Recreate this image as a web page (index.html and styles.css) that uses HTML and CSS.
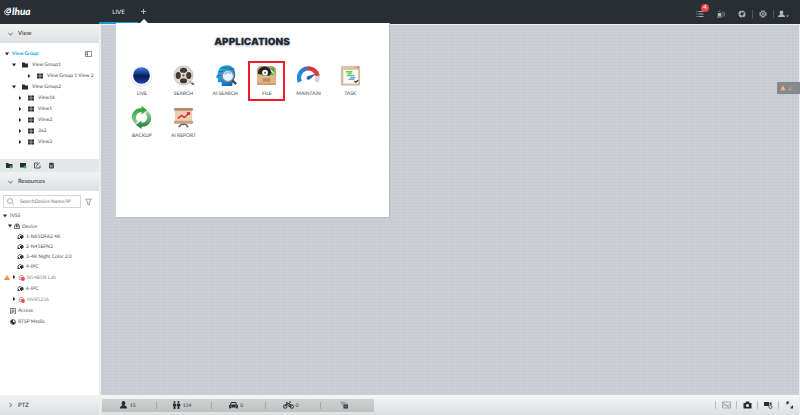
FILE: index.html
```html
<!DOCTYPE html>
<html lang="en">
<head>
<meta charset="utf-8">
<title>Applications</title>
<link rel="stylesheet" href="styles.css">
</head>
<body>
<svg class="defs" aria-hidden="true">
  <symbol id="down" viewBox="0 0 4 4"><path d="M0 .5h4L2 3.5z"/></symbol>
  <symbol id="right" viewBox="0 0 4 4"><path d="M1 0v4l2.400-2z"/></symbol>
  <symbol id="folder" viewBox="0 0 12 12"><path d="M0 1h5l1.500 2H12v8H0z"/></symbol>
  <symbol id="tiles" viewBox="0 0 12 12"><path d="M0 1h5.500v4.500H0zM6.500 1H12v4.500H6.500zM0 6.500h5.500V11H0zM6.500 6.500H12V11H6.500z"/></symbol>
  <symbol id="camera" viewBox="0 0 14 14"><path d="M3 10a4.200 4.200 0 1 1 7-5" fill="none" stroke="currentColor" stroke-width="1.500"/><path d="M1 12h5v-1.500H4L2.500 9H1zM6 6l6-2 1.500 5-3 1v2H8V10H6z"/></symbol>
  <symbol id="offline" viewBox="0 0 14 14"><path d="M2 11V8l2-5h6l2 5" fill="none" stroke="#c98d8d" stroke-width="1.500"/><path d="M3 7h6M2 11h5" stroke="#b98080" stroke-width="1.500"/><circle cx="10" cy="10" r="3.800" fill="#ec4a50"/></symbol>
  <symbol id="warn" viewBox="0 0 14 14"><path d="M7 1l6.500 12H.5z"/><path d="M7 5v4M7 10.300v1.500" stroke="#fff" stroke-width="1.400"/></symbol>
  <symbol id="chevron" viewBox="0 0 6 6"><path d="M.5 1.500L3 4.500l2.500-3" fill="none" stroke="currentColor" stroke-width=".8"/></symbol>
</svg>

<header class="topbar">
  <a class="brand" href="#" aria-label="alhua">
    <svg viewBox="0 0 9 9"><path d="M8 .9C4 .1.900 2.600.7 5.200.6 8.200 4 8.900 6.500 7.600" fill="none" stroke="currentColor"/><path d="M7.800 2.500C5 2 3.200 3.300 3 4.800c-.1 1.700 2.600 1.600 3.900-.3L7.600 2.600 6.800 6.400" fill="none" stroke="currentColor" stroke-width="1.300"/></svg><span>lhua</span>
  </a>
  <nav class="tabs">
    <button class="tab active">LIVE</button>
    <button class="tab add" aria-label="Add tab"><svg viewBox="0 0 5 5"><path d="M2.500 0v5M0 2.500h5" stroke="currentColor"/></svg></button>
  </nav>
  <div class="tools">
    <button aria-label="Events"><svg viewBox="0 0 16 16"><path d="M1 3h2M1 8h2M1 13h2M5 3h10M5 8h10M5 13h10" stroke="currentColor" stroke-width="1.800"/></svg><span class="badge">4</span></button>
    <button aria-label="Alarm"><svg viewBox="0 0 16 16"><path d="M0 13h10v2H0zM1.500 12V6h7v6z"/><path d="M1 2l1.500 2M5 1v3M9 2L7.500 4" stroke="currentColor"/><path d="M11 4q3 4 0 9M13.500 3q3.500 5 0 11" fill="none" stroke="currentColor"/></svg></button>
    <button aria-label="System status"><svg viewBox="0 0 16 16"><circle cx="8" cy="8" r="5.200" fill="none" stroke="currentColor" stroke-width="4" stroke-dasharray="7 1"/><path d="M8 8l6-6" stroke="#272e34" stroke-width="1.500"/></svg></button>
    <button class="ruled" aria-label="Settings"><svg viewBox="0 0 16 16"><circle cx="8" cy="8" r="6.500" fill="none" stroke="currentColor" stroke-width="2" stroke-dasharray="3.400 1.700"/><circle cx="8" cy="8" r="4.800" fill="none" stroke="currentColor" stroke-width="2"/><circle cx="8" cy="8" r="1.800" fill="currentColor"/></svg></button>
    <button class="ruled" aria-label="User"><svg class="wide" viewBox="0 0 22 16"><path d="M7 1c5 0 4 6 2 8 2 1 5 1 5 5H0c0-4 3-4 5-5-2-2-3-8 2-8zM16 11h6l-3 3z" fill="currentColor"/></svg></button>
  </div>
</header>

<div class="workspace">
  <aside class="sidebar">
    <button class="section"><svg><use href="#chevron"/></svg>View</button>
    <div class="views">
      <ul class="tree">
        <li class="root"><svg class="caret"><use href="#down"/></svg><span>View Group</span><svg class="layout" viewBox="0 0 14 12"><path d="M1 1h12v10H1zM5 1v10M1 4h4M1 7h4" fill="none" stroke="currentColor" stroke-width="1.400"/></svg></li>
        <li class="group"><svg class="caret"><use href="#down"/></svg><svg class="icon"><use href="#folder"/></svg><span>View Group1</span></li>
        <li class="deep"><svg class="caret"><use href="#right"/></svg><svg class="icon"><use href="#tiles"/></svg><span>View Group 1 View 2</span></li>
        <li class="group"><svg class="caret"><use href="#down"/></svg><svg class="icon"><use href="#folder"/></svg><span>View Group2</span></li>
        <li class="leaf"><svg class="caret"><use href="#right"/></svg><svg class="icon"><use href="#tiles"/></svg><span>View16</span></li>
        <li class="leaf"><svg class="caret"><use href="#right"/></svg><svg class="icon"><use href="#tiles"/></svg><span>View1</span></li>
        <li class="leaf"><svg class="caret"><use href="#right"/></svg><svg class="icon"><use href="#tiles"/></svg><span>View2</span></li>
        <li class="leaf"><svg class="caret"><use href="#right"/></svg><svg class="icon"><use href="#tiles"/></svg><span>3x2</span></li>
        <li class="leaf"><svg class="caret"><use href="#right"/></svg><svg class="icon"><use href="#tiles"/></svg><span>View3</span></li>
      </ul>
    </div>
    <div class="actions">
      <button aria-label="Add group"><svg viewBox="0 0 14 14"><path d="M0 2h5l1 2h7v8H0z"/><path d="M7 10h6M10 7v6" stroke="#35bd68" stroke-width="2.500"/></svg></button>
      <button aria-label="Add view"><svg viewBox="0 0 14 14"><path d="M0 2h12v9H0z"/><path d="M7 10h6M10 7v6" stroke="#35bd68" stroke-width="2.500"/></svg></button>
      <button aria-label="Edit"><svg viewBox="0 0 14 14"><path d="M8 2H1v10h11V7M5 9l1-3 6-5" fill="none" stroke="currentColor" stroke-width="1.500"/></svg></button>
      <button aria-label="Delete"><svg viewBox="0 0 14 14"><path d="M2 3h10M5 2h4M3 5h8v7H3zM6 5v7M8.500 5v7" fill="none" stroke="currentColor" stroke-width="1.600"/></svg></button>
    </div>
    <button class="section"><svg><use href="#chevron"/></svg>Resources</button>
    <div class="resources">
      <div class="search">
        <label><svg viewBox="0 0 14 14"><circle cx="6" cy="6" r="5"/><path d="M10 10l3.500 3.500"/></svg><input type="text" placeholder="SearchDevice Name/IP" aria-label="Search device name or IP"></label>
        <button aria-label="Filter"><svg viewBox="0 0 12 14"><path d="M1 2h10L7.500 7v5l-3-1V7z"/></svg></button>
      </div>
      <ul class="tree devices">
        <li class="site"><svg class="caret"><use href="#down"/></svg><span>IVSS</span></li>
        <li class="device"><svg class="caret"><use href="#down"/></svg><svg class="icon" viewBox="0 0 12 12"><path d="M1 11V6l2-4h6l2 4v5zM3 6h6M5 2v7M8 2v7" fill="none" stroke="currentColor" stroke-width="1.300"/></svg><span>Device</span></li>
        <li class="cam"><svg class="icon"><use href="#camera"/></svg><span>1-N85DF62 4K</span></li>
        <li class="cam"><svg class="icon"><use href="#camera"/></svg><span>2-N45EFN2</span></li>
        <li class="cam"><svg class="icon"><use href="#camera"/></svg><span>3-4K Night Color 2.0</span></li>
        <li class="cam"><svg class="icon"><use href="#camera"/></svg><span>4-IPC</span></li>
        <li class="recorder alert"><svg class="icon warning"><use href="#warn"/></svg><svg class="caret"><use href="#right"/></svg><svg class="icon"><use href="#offline"/></svg><span>N54B5N Lab</span></li>
        <li class="cam"><svg class="icon"><use href="#camera"/></svg><span>6-IPC</span></li>
        <li class="recorder"><svg class="caret"><use href="#right"/></svg><svg class="icon"><use href="#offline"/></svg><span>NVR5216</span></li>
        <li class="other"><svg class="icon" viewBox="0 0 12 12"><path d="M3 11H1V1h10v10H8M4 11V4h4v4H4" fill="none" stroke="currentColor" stroke-width="1.200"/></svg><span>Access</span></li>
        <li class="other"><svg class="icon" viewBox="0 0 12 12"><circle cx="6" cy="6" r="4.800" fill="none" stroke="currentColor" stroke-width="1.600"/><path d="M6 1v5l5 1-4 4-4-3-2-4z"/></svg><span>RTSP Media</span></li>
      </ul>
    </div>
    <button class="section ptz"><svg><use href="#chevron"/></svg>PTZ</button>
  </aside>

  <main class="stage">
    <div class="canvas"></div>
    <button class="alarms"><svg><use href="#warn"/></svg><span>4</span></button>
    <footer class="statusbar">
      <ul class="counts">
        <li><svg viewBox="0 0 16 16"><path d="M8 0c5 0 4 7 2 9 2 1 5 1 5 6H1c0-5 3-5 5-6C4 7 3 0 8 0z"/></svg><span>15</span></li>
        <li><svg viewBox="0 0 16 16"><circle cx="4" cy="2" r="2"/><circle cx="12" cy="2" r="2"/><path d="M1 5h6v5H6v6H2v-6H1zM9 5h6l1 5h-2v6h-4v-6H8z"/></svg><span>154</span></li>
        <li><svg viewBox="0 0 18 16"><path d="M4 2h10l2 5 2 2v4h-1v2h-3v-2H4v2H1v-2H0V9l2-2z"/><path d="M5 4h8l1 3H4zM3 9h2v2H3zM13 9h2v2h-2z" fill="#c8cac9"/></svg><span>0</span></li>
        <li><svg class="bike" viewBox="0 0 22 16"><g fill="none" stroke="currentColor" stroke-width="2"><circle cx="4.500" cy="11" r="3.500"/><circle cx="17.500" cy="11" r="3.500"/><path d="M4 11l4-6 4 6h3l-2-6H9M13 5l4 6M6 3h3M12 2h4"/></g></svg><span>0</span></li>
        <li><svg viewBox="0 0 16 16"><path d="M0 2h10M5 2v8M1 5h3M7 5h4M13 3v3" fill="none" stroke="#7b8082" stroke-width="1.400"/><path d="M6 7h9v8H6z"/><path d="M9 7v8M12 7v8M6 11h9" stroke="#a5a9aa" stroke-width=".7"/></svg></li>
      </ul>
      <div class="controls">
        <button aria-label="Image off"><svg class="dim" viewBox="0 0 18 16"><path d="M1 2h16v12H1zM1 11l5-4 4 3 7-3M2 3l13 11" fill="none" stroke="currentColor" stroke-width="1.400"/></svg></button>
        <button aria-label="Snapshot"><svg viewBox="0 0 18 16"><path d="M1 4h4l1-3h6l1 3h4v11H1z"/><circle cx="9" cy="9" r="3" fill="#eef0f1"/></svg></button>
        <button aria-label="Record"><svg viewBox="0 0 18 16"><path d="M0 2h10v8H0zM10 5l5-3v7z"/><circle cx="13" cy="12" r="3" fill="#eef0f1" stroke="currentColor" stroke-width="1.500"/></svg></button>
        <button aria-label="Full screen"><svg viewBox="0 0 18 16"><path d="M3 1h6L3 8zM16 15h-6l6-7z"/><path d="M4 3l3 3M15 14l-3-3" stroke="currentColor" stroke-width="2"/></svg></button>
      </div>
    </footer>
  </main>
</div>

<section class="panel">
  <h1>APPLICATIONS</h1>
  <div class="apps">
    <button><svg viewBox="0 0 24 24"><defs><linearGradient id="lens" x2="0" y2="1"><stop stop-color="#477ee0"/><stop offset=".42" stop-color="#11337f"/><stop offset=".52" stop-color="#07194c"/><stop offset="1" stop-color="#1e43b6"/></linearGradient></defs><circle cx="12" cy="12.500" r="11" fill="#dcdcde"/><circle cx="12" cy="12" r="10.600" fill="#fafafa"/><circle cx="12" cy="12" r="8.700" fill="url(#lens)"/></svg>LIVE</button>
    <button><svg viewBox="0 0 24 24"><circle cx="12" cy="12" r="10.500" fill="#cbc9c7"/><circle cx="12" cy="12" r="9.300" fill="#dddbd9"/><g fill="#49372d"><ellipse cx="12" cy="6.500" rx="3.700" ry="2.700"/><ellipse cx="12" cy="17.500" rx="3.700" ry="2.700"/><ellipse cx="6.500" cy="12" rx="2.700" ry="3.700"/><ellipse cx="17.500" cy="12" rx="2.700" ry="3.700"/></g><circle cx="12" cy="12" r="1.200" fill="#5f5751"/><path d="M18 18l4 3" stroke="#bbb5b0" stroke-width="2"/><path d="M20.500 20l2.500 1.500" stroke="#8b3f2e" stroke-width="1.500"/></svg>SEARCH</button>
    <button><svg viewBox="0 0 24 24"><defs><linearGradient id="head" x2="1" y2="1"><stop stop-color="#35c1ee"/><stop offset="1" stop-color="#0757a8"/></linearGradient></defs><path d="M8 23v-4H4v-4l-2-1 2-4C4-1 21-2 22 9c1 6-3 8-3 14z" fill="url(#head)"/><path d="M5 8h8l3-3h5M7 4h7l2-2M4 12h6" fill="none" stroke="#086cb7"/><circle cx="14.500" cy="12.500" r="6" fill="#e8f4fb" stroke="#7d91a2" stroke-width="1.500"/><path d="M11 11q3-4 7-1" fill="none" stroke="#8ac6ed" stroke-width="2"/><path d="M19 17l4 4" stroke="#3c4650" stroke-width="2.400"/></svg>AI SEARCH</button>
    <button class="selected"><svg viewBox="0 0 24 24"><path d="M2 5l3-3h14l3 3v8H2z" fill="#c99b6b"/><path d="M12 5l8-1v8H12z" fill="#36ad4d"/><path d="M13 9l3-3 4 4" fill="none" stroke="#edf5c0" stroke-width="1.300"/><path d="M3 10a7 7 0 1 1 14-1l-2 3H8z" fill="#242221"/><circle cx="10.500" cy="9" r="3" fill="#fff"/><circle cx="10.500" cy="9" r="1" fill="#5c4a42"/><path d="M2 11h5l2 2h6l2-2h5v9q0 2-2 2H4q-2 0-2-2z" fill="#dfb486"/><path d="M2 20q0 2 2 2h16q2 0 2-2" fill="#c99b6e"/><rect x="8" y="15" width="8" height="3.500" fill="#bd8e63"/></svg>FILE</button>
    <button><svg viewBox="0 0 24 24"><defs><linearGradient id="dial"><stop stop-color="#168fec"/><stop offset=".35" stop-color="#4c72ba"/><stop offset=".6" stop-color="#da3338"/><stop offset=".9" stop-color="#e33b3d"/></linearGradient></defs><path d="M3 18.500a9.800 9.800 0 1 1 18.500-6" fill="none" stroke="url(#dial)" stroke-width="4.500"/><path d="M21.500 12.500q.3 3-1.200 6" fill="none" stroke="#cfd4da" stroke-width="4.500"/><path d="M20 10l-6.500 6q-3 1-3.500-1t2-2.500z" fill="#315dad"/></svg>MAINTAIN</button>
    <button><svg viewBox="0 0 24 24"><rect x="2" y="2" width="20" height="20.500" rx="1" fill="#d1bba4"/><path d="M4.500 6h15.500v14.500h-15.500z" fill="#f9f8f2"/><path d="M2 2h20v3H2z" fill="#dbc5ad"/><circle cx="17" cy="3.500" r=".9" fill="#d9a43c"/><circle cx="20" cy="3.500" r=".9" fill="#bf5147"/><path d="M7 8h7M9 10h4M8 12h8" stroke="#69cf54" stroke-width="1.500"/><path d="M12 14h5M10 16h6" stroke="#65aae5" stroke-width="1.500"/><path d="M16 18l1.500 1 2.500-2" fill="none" stroke="#333" stroke-width="1.300"/></svg>TASK</button>
    <button><svg viewBox="0 0 24 24"><defs><linearGradient id="up" x2="0" y2="1"><stop stop-color="#1e9c2c"/><stop offset="1" stop-color="#9bd596"/></linearGradient><linearGradient id="dn" x2="0" y2="1"><stop stop-color="#a5d8a2"/><stop offset="1" stop-color="#117d2c"/></linearGradient></defs><path d="M6 19A9 9 0 0 1 12 2.500V0l6 4.500L12 9V6.500A5.500 5.500 0 0 0 8 16z" fill="url(#up)"/><path d="M18 5a9 9 0 0 1-6 16.500V24l-6-4.500L12 15v2.500A5.500 5.500 0 0 0 16 8z" fill="url(#dn)"/></svg>BACKUP</button>
    <button><svg viewBox="0 0 24 24"><path d="M12 17v3M11 18l-4 4M13 18l4 4" stroke="#6b6562" stroke-width="1.600"/><rect x="3" y="4" width="18" height="13" fill="#ebd2b6"/><rect x="2" y="2" width="20" height="3" rx="1" fill="#b38a68"/><rect x="2" y="15.500" width="20" height="3" rx="1" fill="#c6a17f"/><path d="M6 13l4-3 3 2 5-5M15.500 7H18v2.500" fill="none" stroke="#e23538" stroke-width="1.700"/></svg>AI REPORT</button>
  </div>
</section>
</body>
</html>
```
FILE: styles.css
```css
* { box-sizing: border-box; }
body {
  margin: 0;
  min-height: 100vh;
  display: flex;
  flex-direction: column;
  background: #eceeef;
  color: #484f54;
  font: 5px/9px Lato, sans-serif;
  text-rendering: geometricPrecision;
}
button, input { font: inherit; color: inherit; text-rendering: inherit; }
button { display: flex; align-items: center; padding: 0; border: 0; background: none; cursor: pointer; }
ul { margin: 0; padding: 0; list-style: none; }
svg { flex: none; fill: currentColor; }
.defs { position: absolute; width: 0; height: 0; }

.topbar { display: flex; height: 24px; background: #272e34; color: #edf1f3; }
.brand { display: flex; align-items: center; width: 99px; padding: 0 0 1px 4px; color: #fff; text-decoration: none; font: italic 900 10px/22px Lato, sans-serif; }
.brand svg { width: 8px; height: 9px; }
.tabs { display: flex; }
.tab { justify-content: center; width: 39px; padding-bottom: 1px; font-size: 6px; }
.tab.active { border-bottom: 2px solid #2196d6; padding: 3px 0 0; }
.tab.add { position: relative; width: 11px; color: #a9bac8; }
.tab.add svg { width: 5px; height: 5px; }
.tab.add::after {
  content: "";
  position: absolute;
  z-index: 2;
  bottom: 0;
  left: 1px;
  border: 5px solid transparent;
  border-top: 0;
  border-bottom-color: #fff;
}
.tools { display: flex; align-items: center; margin-left: auto; padding: 4px 6px 0 0; color: #a9b8c4; }
.tools button { position: relative; justify-content: center; width: 21px; height: 12px; }
.tools svg { width: 8px; height: 8px; }
.tools svg.wide { width: 11px; }
.ruled::before { content: ""; position: absolute; left: 0; top: 2px; height: 8px; border-left: 1px solid #50565a; }
.badge { position: absolute; top: -4px; right: 1px; width: 8px; height: 8px; border-radius: 50%; background: #ef4648; color: #fff; font-size: 6px; line-height: 8px; text-align: center; }

.workspace { flex: 1; display: flex; }
.sidebar { display: flex; flex-direction: column; width: 99px; background: #fff; }
.section {
  gap: 5px;
  width: 100%;
  height: 19px;
  padding: 0 8px;
  background: linear-gradient(#f2f3f3, #dcdfe1);
  color: #353b40;
  font-size: 6px;
  font-weight: 500;
}
.section svg { width: 5px; height: 6px; }
.section.ptz { height: 20px; margin-top: auto; }
.ptz svg { transform: rotate(-90deg); }
.views { height: 116px; padding-top: 5px; }
.tree li { display: flex; align-items: center; height: 11px; gap: 4px; white-space: nowrap; }
.tree span, .counts span, .alarms span { padding-top: 2px; }
.tree .caret { width: 4px; height: 4px; color: #22282d; }
.tree .icon { width: 6px; height: 6px; color: #252c32; }
.views .icon { margin-left: 2px; }
.tree .root { gap: 3px; padding: 0 7px 0 5px; color: #0aa4ee; font-weight: 700; }
.layout { width: 7px; height: 6px; margin-left: auto; color: #60666b; }
.tree .group { padding-left: 12px; }
.tree .leaf { padding-left: 18px; }
.tree .deep { padding-left: 27px; }
.actions { display: flex; gap: 7px; height: 13px; padding: 0 6px; background: #e4e8e8; color: #252c32; }
.actions svg { width: 7px; height: 7px; }

.search { display: flex; align-items: center; gap: 4px; padding: 4px 3px 2px; }
.search label { display: flex; align-items: center; gap: 4px; width: 78px; height: 13px; padding: 0 3px; border: 1px solid #d4d6d8; }
.search label svg { width: 7px; height: 7px; }
.search svg { fill: none; stroke: #596065; stroke-width: 1; }
.search input { min-width: 0; width: 100%; padding: 2px 2px 0; border: 0; outline: 0; background: none; }
.search input::placeholder { color: #6c7073; opacity: 1; }
.search button svg { width: 7px; height: 8px; }
.tree.devices li { gap: 2px; }
.tree.devices .site { gap: 3px; padding-left: 3px; }
.tree.devices .device { height: 10px; padding-left: 8px; }
.tree.devices .cam { height: 10px; padding-left: 17px; }
.tree.devices .recorder { height: 12px; padding-left: 12px; color: #888d90; }
.tree.devices .recorder.alert { padding-left: 4px; }
.tree .icon.warning { color: #ef7c25; }
.tree.devices .other { padding-left: 10px; }
.cam .icon, .recorder .icon { width: 7px; height: 7px; }
.recorder .warning { width: 6px; }

.stage { position: relative; flex: 1; display: flex; flex-direction: column; padding: 1px 1px 0 2px; }
.canvas {
  flex: 1;
  background-color: #cccfd3;
  background-image: radial-gradient(circle, #c3c7cb 25%, transparent 60%);
  background-size: 3px 3px;
}
.alarms { position: absolute; top: 58px; right: 0; gap: 2px; width: 23px; height: 12px; padding-left: 3px; border-radius: 1px 0 0 1px; background: #85898d; color: #e5a478; font-size: 6px; }
.alarms svg { width: 6px; height: 6px; }
.statusbar { display: flex; align-items: center; justify-content: space-between; height: 20px; background: linear-gradient(#f5f6f6, #dcdfe1); }
.counts { display: flex; width: 39%; height: 13px; margin-left: 1px; background: linear-gradient(#d0d2d1, #bec1c0); color: #252c32; }
.counts li { position: relative; flex: 1; display: flex; align-items: center; justify-content: center; gap: 2px; padding-right: 4px; }
.counts li + li::before { content: ""; position: absolute; left: 0; top: 3px; height: 7px; border-left: 1px solid #a2a6a7; }
.counts svg { width: 9px; height: 8px; }
.counts svg.bike { width: 11px; }
.controls { display: flex; color: #252c32; }
.controls button { justify-content: center; width: 21px; height: 8px; border-left: 1px solid #b8bbbd; }
.controls svg { width: 9px; height: 8px; }
.controls .dim { color: #8c9194; }

.panel {
  position: absolute;
  z-index: 1;
  top: 23px;
  left: 116px;
  width: 274px;
  padding: 12px 18px 73px 5px;
  border: solid #b9bdc1;
  border-width: 0 1px 1px 0;
  background: #fff;
}
h1 { margin: 0 -12px 11px 0; color: #22292f; font: 900 10px/14px Inter, Arial, sans-serif; text-align: center; text-shadow: 0 1px 2px #9baac0; }
.apps { display: grid; grid-template-columns: repeat(6, 1fr); }
.apps button { flex-direction: column; justify-content: center; gap: 3px; height: 42px; white-space: nowrap; }
.apps svg { width: 23px; height: 23px; }
.apps .selected { justify-self: center; width: 37px; height: 40px; margin: 1px 0; border: 2px solid #ee1c25; }
```
